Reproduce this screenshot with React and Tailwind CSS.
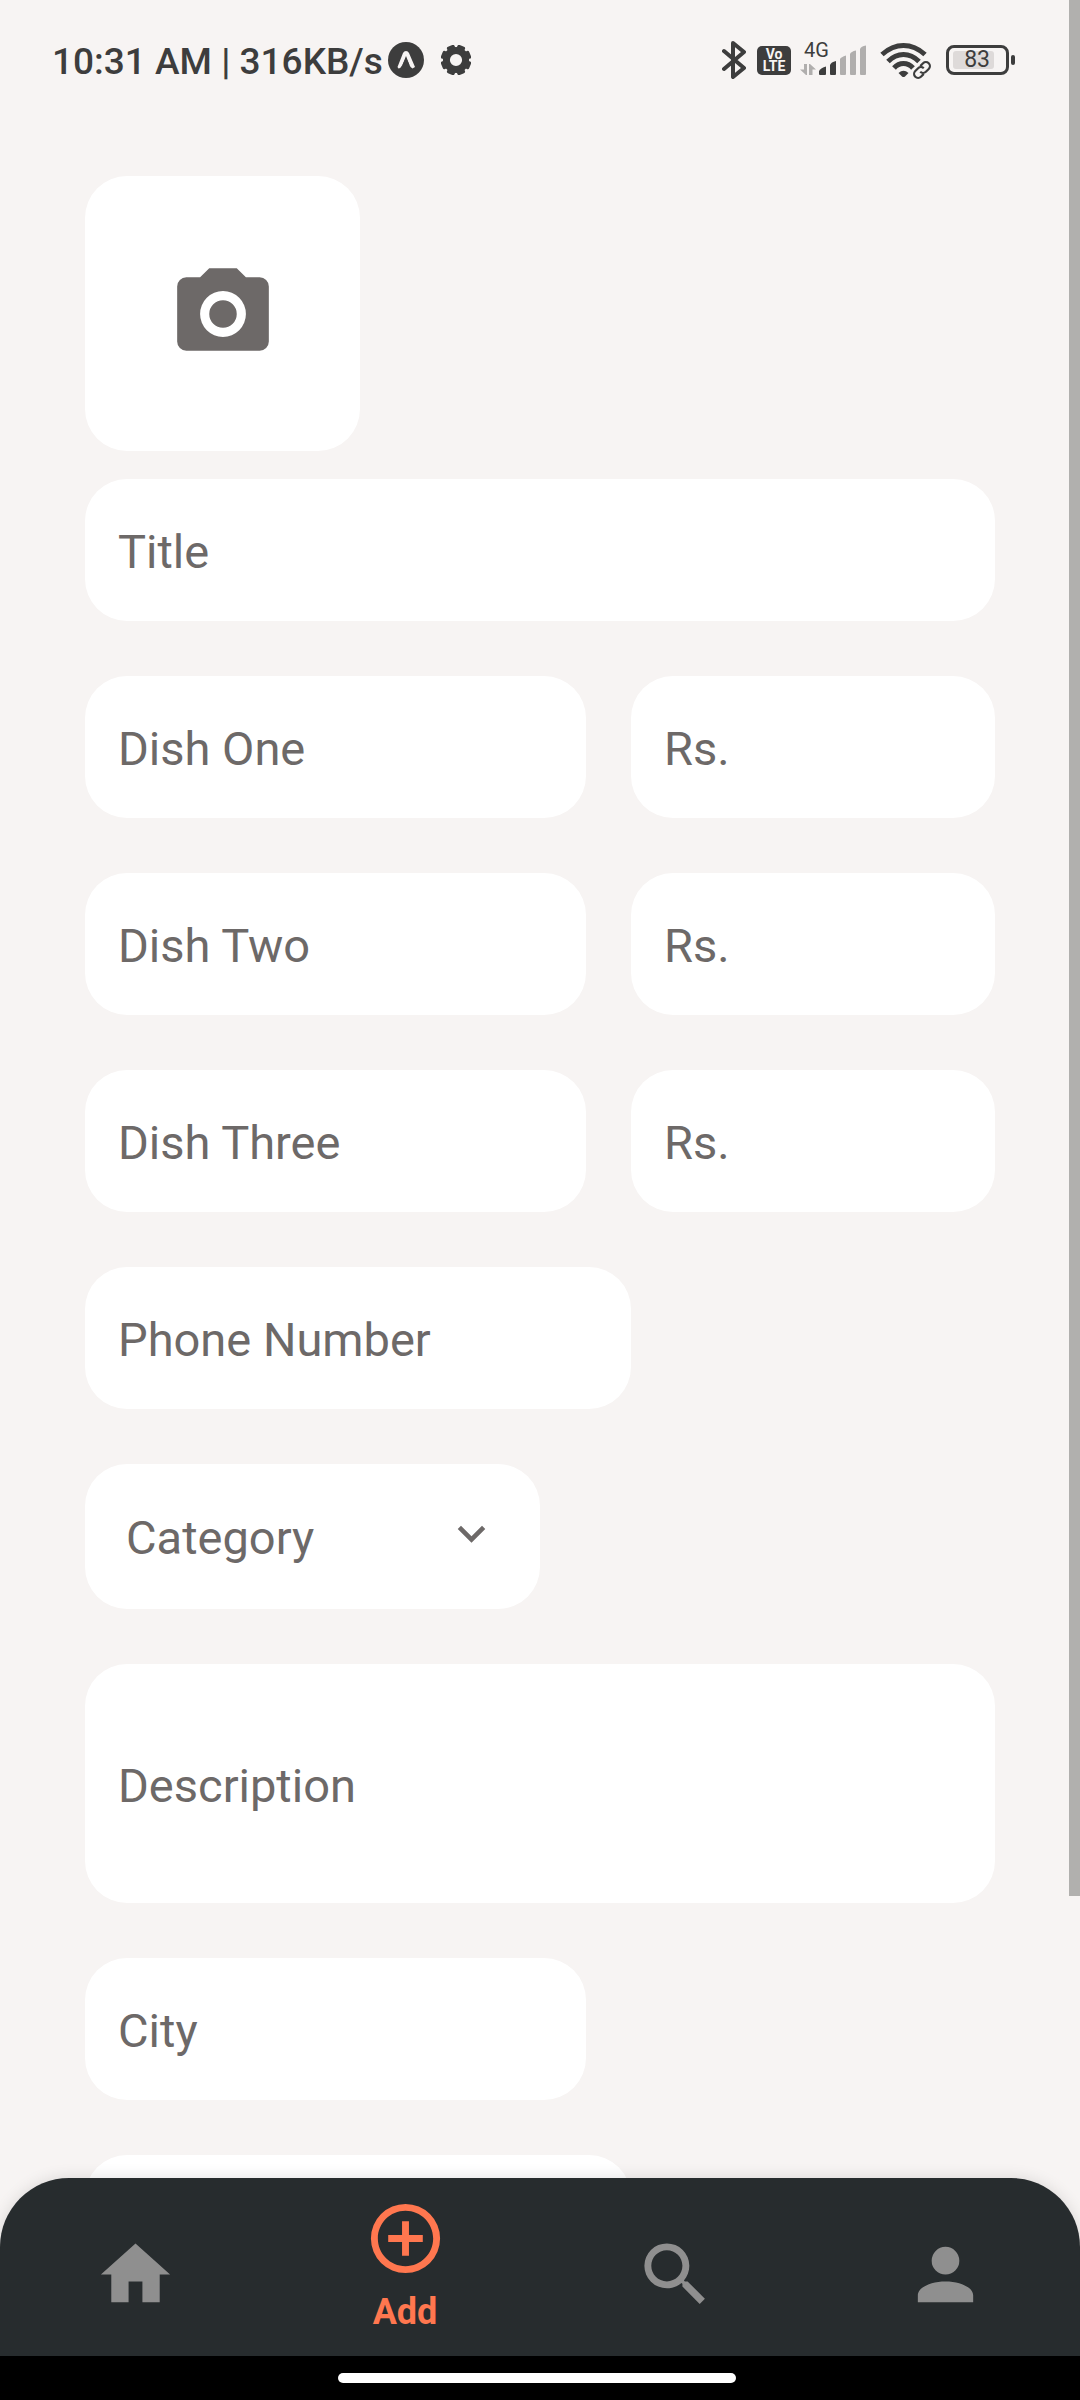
import React from "react";

const MDI = {
  camera:
    "M4 4H7L9 2H15L17 4H20A2 2 0 0 1 22 6V18A2 2 0 0 1 20 20H4A2 2 0 0 1 2 18V6A2 2 0 0 1 4 4M12 7A5 5 0 0 0 7 12A5 5 0 0 0 12 17A5 5 0 0 0 17 12A5 5 0 0 0 12 7M12 9A3 3 0 0 1 15 12A3 3 0 0 1 12 15A3 3 0 0 1 9 12A3 3 0 0 1 12 9Z",
  chevron: "M7.41 8.58L12 13.17L16.59 8.58L18 10L12 16L6 10Z",
  home: "M10 20V14H14V20H19V12H22L12 3L2 12H5V20H10Z",
  add: "M12 20C7.59 20 4 16.41 4 12S7.59 4 12 4S20 7.59 20 12S16.41 20 12 20M12 2A10 10 0 0 0 2 12A10 10 0 0 0 12 22A10 10 0 0 0 22 12A10 10 0 0 0 12 2M13 7H11V11H7V13H11V17H13V13H17V11H13V7Z",
  search:
    "M9.5 3A6.5 6.5 0 0 1 16 9.5C16 11.11 15.41 12.59 14.44 13.73L14.71 14H15.5L20.5 19L19 20.5L14 15.5V14.71L13.73 14.44C12.59 15.41 11.11 16 9.5 16A6.5 6.5 0 0 1 3 9.5A6.5 6.5 0 0 1 9.5 3M9.5 5C7 5 5 7 5 9.5S7 14 9.5 14S14 12 14 9.5S12 5 9.5 5Z",
  account:
    "M12 4A4 4 0 0 1 16 8A4 4 0 0 1 12 12A4 4 0 0 1 8 8A4 4 0 0 1 12 4M12 14C16.42 14 20 15.79 20 18V20H4V18C4 15.79 7.58 14 12 14Z",
};

function Icon({ name, className }) {
  return (
    <svg viewBox="0 0 24 24" fill="currentColor" className={className} aria-hidden="true">
      <path d={MDI[name]} fillRule="evenodd" />
    </svg>
  );
}

function ExpoIcon() {
  return (
    <svg viewBox="0 0 36 36" className="size-9" aria-hidden="true">
      <circle cx="18" cy="18" r="18" fill="#3d3d3d" />
      <path
        d="M9.5 25L15 11Q16 9 18 9Q20 9 21 11L27 25L24.500 26.500Q22.500 26 21.500 23L18 15.500L14 23.500Q12.500 26.500 10.500 26.500Z"
        fill="#f7f4f3"
      />
      <path d="M18 14L14.500 23Q18 19 21.500 23Z" fill="#3d3d3d" />
    </svg>
  );
}

function GearIcon() {
  const teeth = [22.5, 67.5, 112.5, 157.5, 202.5, 247.5, 292.5, 337.5];
  return (
    <svg viewBox="0 0 30 30" className="ml-[17px] size-[30px]" aria-hidden="true">
      <circle cx="15" cy="15" r="9.6" fill="none" stroke="#3d3d3d" strokeWidth="7" />
      {teeth.map((a) => (
        <rect
          key={a}
          x="10.9"
          y="-0.300"
          width="8.2"
          height="6"
          rx="1.8"
          fill="#3d3d3d"
          transform={`rotate(${a} 15 15)`}
        />
      ))}
    </svg>
  );
}

function BluetoothIcon() {
  return (
    <svg viewBox="0 0 24 40" className="h-10 w-6" fill="none" stroke="#3d3d3d" strokeWidth="4" strokeLinejoin="round" strokeLinecap="round" aria-hidden="true">
      <path d="M2 11L22 28L11 37V3L22 12L2 29" />
    </svg>
  );
}

function SignalBars() {
  return (
    <svg viewBox="0 0 68 32" className="h-8 w-[68px]" aria-hidden="true">
      <g fill="#b0aead">
        <path d="M4 20H7V31H6L0 25.500H4ZM9 31V20H10L16 25.500H12.500V31Z" />
        <path d="M40 31V15Q41 13 46 11.500V30Q46 31 45 31H41Q40 31 40 30Z" />
        <path d="M50 30V10Q51 7.500 56 6.500V30Q56 31 55 31H51Q50 31 50 30Z" />
        <path d="M60 30V5Q61 2 66 1.500V30Q66 31 65 31H61Q60 31 60 30Z" />
      </g>
      <g fill="#3d3d3d">
        <path d="M19 30V27Q21 23.500 26 22.500V30Q26 31 25 31H20Q19 31 19 30Z" />
        <path d="M30 30V21Q31 18 36 17V30Q36 31 35 31H31Q30 31 30 30Z" />
      </g>
    </svg>
  );
}

function WifiIcon() {
  return (
    <svg viewBox="0 0 52 38" className="ml-[12px] h-[38px] w-[52px]" fill="none" stroke="#3d3d3d" aria-hidden="true">
      <g strokeWidth="5">
        <path d="M2 13.500Q12 4.500 23.500 4.500T45 13.500" />
        <path d="M8 20.500Q15 13.500 23.500 13.500T39 20.500" />
        <path d="M14 27Q18 22.500 23.500 22.500T33 27" />
      </g>
      <path d="M18.500 32Q23.500 27.500 28.500 32L25 35.500Q23.500 36.700 22 35.500Z" fill="#3d3d3d" stroke="none" />
      <g strokeWidth="2.200" transform="rotate(-45 42 29)">
        <path d="M40.500 33H36.500A4 4 0 0 1 36.500 25H40.500A4 4 0 0 1 44.500 29" />
        <path d="M43.500 25H47.500A4 4 0 0 1 47.500 33H43.500A4 4 0 0 1 39.500 29" />
      </g>
    </svg>
  );
}

function StatusBar() {
  return (
    <header className="relative flex h-[120px] shrink-0 items-center justify-between pl-[52px] pr-[65px] text-[#3d3d3d]">
      <div className="flex items-center">
        <span className="mr-[5px] pt-1 text-[37px] leading-[44px] font-medium whitespace-nowrap">10:31 AM | 316KB/s</span>
        <ExpoIcon />
        <GearIcon />
      </div>
      <div className="flex items-center">
        <BluetoothIcon />
        <span className="ml-[11px] flex h-[29px] w-[34px] flex-col items-center justify-center rounded-[5px] bg-[#3d3d3d] text-[14px] leading-[12px] font-bold text-[#f7f4f3]">
          <span>Vo</span>
          <span>LTE</span>
        </span>
        <span className="relative ml-[9px] flex">
          <SignalBars />
          <span className="absolute -top-[4px] left-1 text-[20px] leading-[20px]">4G</span>
        </span>
        <WifiIcon />
        <span className="ml-[14px] flex h-[30px] w-[63px] items-center rounded-[8px] border-3 border-[#3d3d3d] px-1">
          <span className="flex h-[18px] w-[41px] items-center justify-end rounded-[3px] bg-[#dedad9] pr-1 text-[23px] leading-[22px]">
            83
          </span>
        </span>
        <span className="ml-[2px] h-[10px] w-1 rounded-[2px] bg-[#3d3d3d]" />
      </div>
    </header>
  );
}

function Field({ label, placeholder = label, type = "text", className }) {
  return (
    <input
      type={type}
      aria-label={label}
      placeholder={placeholder}
      className={`h-[142px] rounded-[42px] bg-white px-[33px] pt-[2px] text-[47px] text-[#6d6968] placeholder:text-[#6d6968] placeholder:opacity-100 ${className}`}
    />
  );
}

const tabs = [
  { icon: "home", label: "Home" },
  { icon: "add", label: "Add", active: true },
  { icon: "search", label: "Search" },
  { icon: "account", label: "Profile" },
];

export default function App() {
  return (
    <div className="relative flex h-screen flex-col overflow-hidden bg-[#f7f4f3] font-[Roboto,sans-serif]">
      <StatusBar />
      <main className="min-h-0 flex-1 overflow-y-auto px-[85px] pt-14 [scrollbar-width:none]">
        <button
          type="button"
          aria-label="Add photo"
          className="flex size-[275px] items-center justify-center rounded-[42px] bg-white text-[#6d6968]"
        >
          <Icon name="camera" className="size-[110px]" />
        </button>
        <form className="mt-7 flex flex-col items-start gap-[55px] pb-[120px]">
          <Field label="Title" className="w-full" />
          {["Dish One", "Dish Two", "Dish Three"].map((dish) => (
            <div key={dish} className="flex w-full justify-between">
              <Field label={dish} className="w-[55%]" />
              <Field label={`${dish} price`} placeholder="Rs." className="w-[40%]" />
            </div>
          ))}
          <Field label="Phone Number" type="tel" className="w-[60%]" />
          <div className="relative h-[145px] w-1/2">
            <select
              aria-label="Category"
              className="size-full appearance-none rounded-[42px] bg-white px-[41px] pt-1 text-[47px] text-[#6d6968]"
            >
              <option>Category</option>
            </select>
            <Icon
              name="chevron"
              className="pointer-events-none absolute top-[42px] right-[41px] size-[55px] text-[#6d6968]"
            />
          </div>
          <textarea
            aria-label="Description"
            placeholder="Description"
            className="h-[239px] w-full shrink-0 resize-none rounded-[42px] bg-white px-[33px] pt-[94px] pb-[89px] text-[47px] leading-[56px] text-[#6d6968] [scrollbar-width:none] placeholder:text-[#6d6968] placeholder:opacity-100"
          />
          <Field label="City" className="w-[55%]" />
          <Field label="Address" placeholder="" className="w-[60%]" />
        </form>
      </main>
      <nav className="relative -mt-[70px] flex h-[178px] shrink-0 rounded-t-[69px] bg-[#272c2e] shadow-[0_0_16px_rgba(0,0,0,0.12)]">
        {tabs.map((tab) =>
          tab.active ? (
            <a key={tab.label} href="#add" aria-current="page" className="flex flex-1 flex-col items-center pt-[19px] text-[#ff774f]">
              <Icon name={tab.icon} className="size-[83px]" />
              <span className="text-[36px] leading-[64px] font-bold">{tab.label}</span>
            </a>
          ) : (
            <a
              key={tab.label}
              href={`#${tab.label.toLowerCase()}`}
              aria-label={tab.label}
              className="flex flex-1 items-center justify-center pt-[14px] text-[#8f8f8f]"
            >
              <Icon name={tab.icon} className="size-[83px]" />
            </a>
          )
        )}
      </nav>
      <div className="relative flex h-11 shrink-0 items-center justify-center bg-black pr-[6px]">
        <span className="h-[10px] w-[37%] rounded-full bg-white" />
      </div>
      <div className="pointer-events-none absolute top-0 right-0 h-[79%] w-[11px] bg-[#b1b0ae]" />
    </div>
  );
}
